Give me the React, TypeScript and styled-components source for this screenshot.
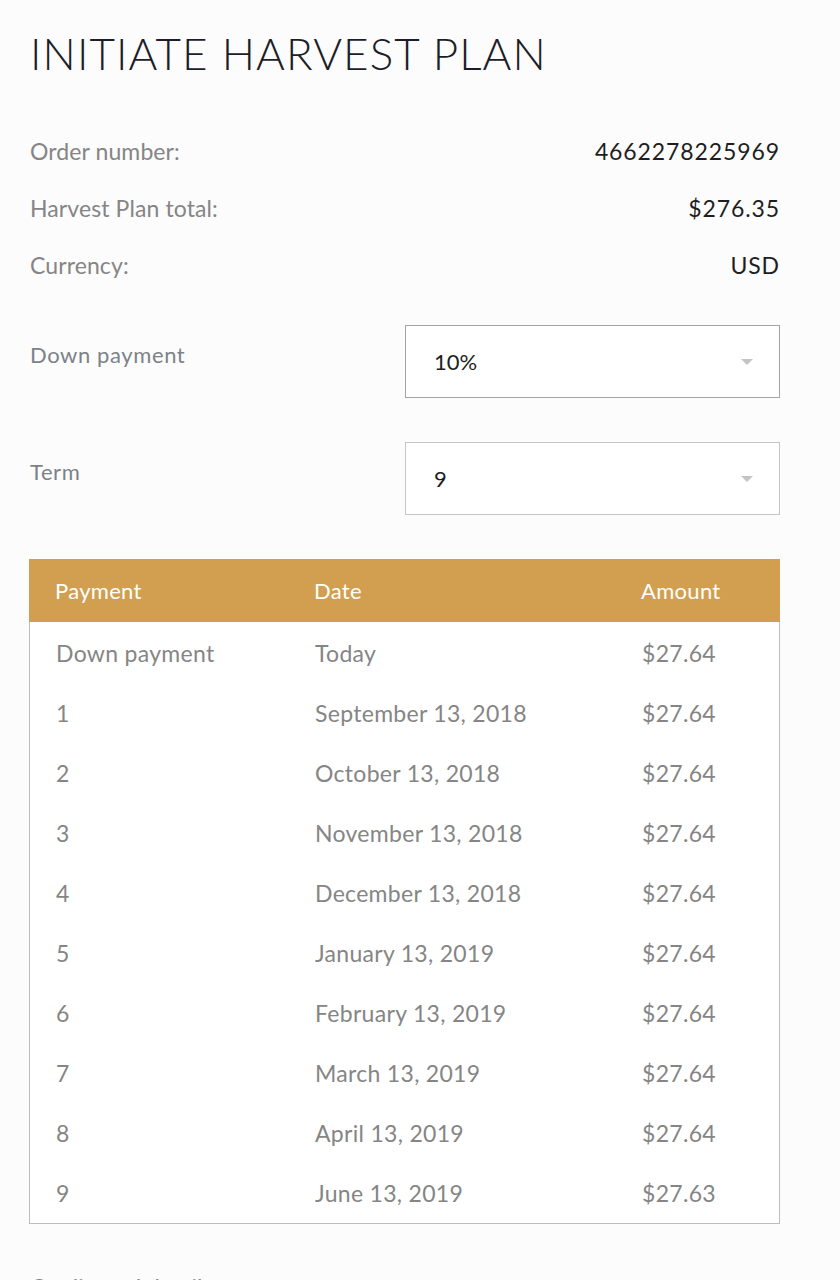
import styled, { createGlobalStyle } from "styled-components";

const GlobalStyle = createGlobalStyle`
  html, body {
    margin: 0;
    padding: 0;
    background: #fcfcfc;
  }
  body {
    font-family: Lato, "Noto Sans", "Liberation Sans", sans-serif;
    -webkit-font-smoothing: antialiased;
  }
`;

const Page = styled.main`
  width: 750px;
  padding: 27px 60px 0 30px;
  height: 1280px;
  overflow: hidden;
  box-sizing: content-box;
`;

const Title = styled.h1`
  margin: 0 0 42px;
  font-size: 44px;
  line-height: 53px;
  font-weight: 300;
  letter-spacing: 1.1px;
  color: #1d1d28;
  white-space: nowrap;
`;

const InfoList = styled.dl`
  margin: 0 0 32px;
`;

const InfoRow = styled.div`
  display: flex;
  justify-content: space-between;
  align-items: center;
  height: 57px;
  font-size: 23px;
`;

const InfoLabel = styled.dt`
  color: #858585;
  font-weight: 400;
  letter-spacing: 0.1px;
`;

const InfoValue = styled.dd`
  margin: 0;
  color: #1e1e22;
  letter-spacing: 0.9px;
`;

const FormRow = styled.div`
  display: grid;
  grid-template-columns: 375px 375px;
  margin-bottom: 44px;
`;

const FieldLabel = styled.label`
  padding-top: 16px;
  font-size: 22px;
  color: #7d8287;
  letter-spacing: 0.6px;
`;

const Select = styled.div<{ $focused?: boolean }>`
  display: flex;
  align-items: center;
  justify-content: space-between;
  height: 73px;
  box-sizing: border-box;
  padding: 0 26px 0 28px;
  background: #fff;
  border: 1px solid ${(p) => (p.$focused ? "#a4a4a4" : "#c6c6c6")};
  font-size: 22px;
  color: #1e1e22;
`;

const Caret = styled.span`
  width: 0;
  height: 0;
  border-left: 6px solid transparent;
  border-right: 6px solid transparent;
  border-top: 6px solid #c4c4c4;
`;

const Table = styled.div`
  width: 751px;
  margin-left: -1px;
  background: #fff;
  border: 1px solid #bdbdbd;
  box-sizing: border-box;
`;

const Row = styled.div<{ $head?: boolean }>`
  display: grid;
  grid-template-columns: 259px 327px 1fr;
  align-items: center;
  height: ${(p) => (p.$head ? "63px" : "60px")};
  padding-left: 26px;
  background: ${(p) => (p.$head ? "#d19f4f" : "transparent")};
  color: ${(p) => (p.$head ? "#fff" : "#858585")};
  font-size: ${(p) => (p.$head ? "22px" : "23px")};
  letter-spacing: 0.3px;
  margin: ${(p) => (p.$head ? "-1px -1px 1px" : "0")};
`;

const Cell = styled.span``;

const SubHeading = styled.h2`
  margin: 48px 0 0;
  font-size: 23px;
  line-height: 30px;
  font-weight: 400;
  color: #858585;
`;

const info = [
  ["Order number:", "4662278225969"],
  ["Harvest Plan total:", "$276.35"],
  ["Currency:", "USD"],
];

const schedule = [
  ["Down payment", "Today", "$27.64"],
  ["1", "September 13, 2018", "$27.64"],
  ["2", "October 13, 2018", "$27.64"],
  ["3", "November 13, 2018", "$27.64"],
  ["4", "December 13, 2018", "$27.64"],
  ["5", "January 13, 2019", "$27.64"],
  ["6", "February 13, 2019", "$27.64"],
  ["7", "March 13, 2019", "$27.64"],
  ["8", "April 13, 2019", "$27.64"],
  ["9", "June 13, 2019", "$27.63"],
];

export default function App() {
  return (
    <>
      <GlobalStyle />
      <Page>
        <Title>INITIATE HARVEST PLAN</Title>
        <InfoList>
          {info.map(([label, value]) => (
            <InfoRow key={label}>
              <InfoLabel>{label}</InfoLabel>
              <InfoValue>{value}</InfoValue>
            </InfoRow>
          ))}
        </InfoList>
        <FormRow>
          <FieldLabel>Down payment</FieldLabel>
          <Select $focused>
            <span>10%</span>
            <Caret />
          </Select>
        </FormRow>
        <FormRow>
          <FieldLabel>Term</FieldLabel>
          <Select>
            <span>9</span>
            <Caret />
          </Select>
        </FormRow>
        <Table>
          <Row $head>
            <Cell>Payment</Cell>
            <Cell>Date</Cell>
            <Cell>Amount</Cell>
          </Row>
          {schedule.map(([n, date, amount]) => (
            <Row key={n}>
              <Cell>{n}</Cell>
              <Cell>{date}</Cell>
              <Cell>{amount}</Cell>
            </Row>
          ))}
        </Table>
        <SubHeading>Credit card details</SubHeading>
      </Page>
    </>
  );
}
